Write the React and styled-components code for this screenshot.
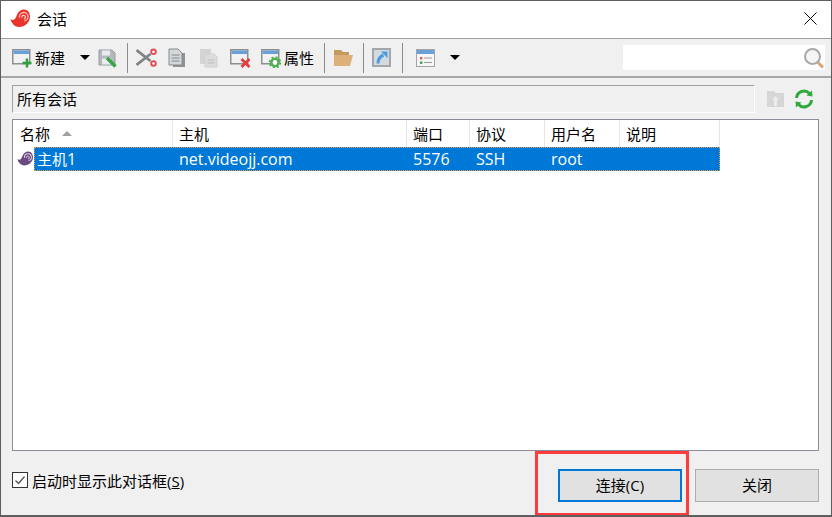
import styled, { createGlobalStyle } from "styled-components";

const GlobalStyle = createGlobalStyle`
  html, body { margin: 0; padding: 0; background: #f0f0f0; }
  * { box-sizing: border-box; }
  body { font-family: "Open Sans", "Noto Sans CJK SC", sans-serif; font-size: 15px; color: #000; }
`;

const Window = styled.div`
  position: relative;
  width: 832px;
  height: 517px;
  display: flex;
  flex-direction: column;
  background: #f0f0f0;
  border: 1px solid #5f5f5f;
  border-bottom-width: 2px;
  overflow: hidden;
`;
const TitleBar = styled.div`
  height: 38px;
  flex: none;
  background: #fff;
  display: flex;
  align-items: center;
  padding: 0 14px 2px 9px;
  gap: 7px;
  border-bottom: 1px solid #a0a0a0;
`;
const TitleText = styled.span`
  flex: 1;
  line-height: 20px;
`;
const Toolbar = styled.div`
  height: 39px;
  flex: none;
  display: flex;
  align-items: center;
  border-bottom: 2px solid #a8a8a8;
  padding-left: 11px;
  padding-right: 6px;
`;
const Tool = styled.div`
  display: flex;
  align-items: center;
  gap: 3px;
  margin-left: ${(p) => p.$gap || 0}px;
  white-space: nowrap;
`;
const Sep = styled.div`
  width: 1px;
  height: 30px;
  background: #8c8c8c;
  margin-left: ${(p) => p.$gap}px;
`;
const Caret = styled.div`
  width: 0;
  height: 0;
  border-left: 5px solid transparent;
  border-right: 5px solid transparent;
  border-top: 5px solid #000;
  margin-left: ${(p) => p.$gap}px;
`;
const Search = styled.div`
  margin-left: auto;
  width: 202px;
  height: 25px;
  background: #fff;
  display: flex;
  align-items: center;
  justify-content: flex-end;
`;
const PathRow = styled.div`
  display: flex;
  align-items: center;
  margin: 7px 0 0 11px;
  height: 28px;
  flex: none;
`;
const PathBox = styled.div`
  width: 743px;
  height: 28px;
  border-top: 1px solid #a0a0a0;
  border-left: 1px solid #a0a0a0;
  border-right: 1px solid #fff;
  border-bottom: 1px solid #fff;
  padding-left: 4px;
  line-height: 26px;
`;
const PathIcons = styled.div`
  display: flex;
  align-items: center;
  gap: 9px;
  margin-left: 11px;
`;
const List = styled.div`
  margin: 6px 12px 0 11px;
  height: 332px;
  flex: none;
  background: #fff;
  border: 1px solid #8c8c9c;
`;
const HeadRow = styled.div`
  display: grid;
  grid-template-columns: 160px 234px 63px 75px 75px 100px;
  height: 27px;
`;
const HeadCell = styled.div`
  display: flex;
  align-items: center;
  padding-left: 6px;
  border-right: 1px solid #e5e5e5;
  gap: 12px;
  &:first-child { padding-left: 7px; }
`;
const SortMark = styled.div`
  width: 0;
  height: 0;
  border-left: 5px solid transparent;
  border-right: 5px solid transparent;
  border-bottom: 5px solid #a0a0a0;
`;
const BodyRow = styled.div`
  display: flex;
  align-items: center;
  height: 24px;
`;
const RowIcon = styled.div`
  width: 21px;
  flex: none;
  padding-left: 4px;
  display: flex;
`;
const Selection = styled.div`
  display: grid;
  grid-template-columns: 139px 234px 63px 75px 75px 100px;
  height: 24px;
  align-items: center;
  background: #0078d7;
  color: #fff;
  outline: 1px dotted #e09a50;
  outline-offset: -1px;
  font-size: 16px;
  line-height: 24px;
`;
const SelCell = styled.div`
  padding-left: 6px;
  &:first-child { padding-left: 3px; }
`;
const CjkName = styled.span`
  font-size: 15px;
`;
const Footer = styled.div`
  flex: 1;
  display: flex;
  align-items: flex-start;
  padding: 18px 12px 0 11px;
`;
const CheckLabel = styled.label`
  display: flex;
  align-items: center;
  gap: 4px;
  height: 16px;
  margin-top: 3px;
  flex: 1;
`;
const CheckBox = styled.span`
  width: 16px;
  height: 16px;
  background: #fff;
  border: 1px solid #333;
  display: flex;
  align-items: center;
  justify-content: center;
`;
const Button = styled.div`
  width: 124px;
  height: 33px;
  display: flex;
  align-items: center;
  justify-content: center;
  padding-bottom: 2px;
  background: #e1e1e1;
  border: ${(p) => p.$primary ? "2px solid #0078d7" : "1px solid #adadad"};
  margin-left: ${(p) => p.$gap || 0}px;
`;
const Mark = styled.div`
  position: absolute;
  left: 534px;
  top: 450px;
  width: 154px;
  height: 65px;
  border: 3px solid #ff3b3b;
  pointer-events: none;
`;

const WinFrame = () => (
  <>
    <rect x="0.75" y="1.75" width="17" height="14" fill="#f2f2f2" stroke="#8f8f8f" strokeWidth="1.5" />
    <rect x="1.5" y="2.5" width="15.500" height="3.5" fill="#6aa0d8" />
  </>
);

const Icon = ({ children, w = 20, h = 20 }) => (
  <svg width={w} height={h} viewBox={`0 0 ${w} ${h}`} style={{ display: "block", flex: "none" }}>{children}</svg>
);

const Shell = ({ color = "#e8352b", size = 20 }) => (
  <svg width={size} height={size} viewBox="0 0 20 20" style={{ display: "block", flex: "none" }}>
    <path d="M0.5 10C3 12 5 11 6.500 7C8 2.500 11 0.500 14 0.500C18 0.500 20 4 20 8C20 13 15 18 9 18C5 18 1.500 14.500 0.500 10Z" fill={color} />
    <path d="M9.500 8.500A4.300 4.300 0 1 1 14.500 12" fill="none" stroke="#fff" strokeWidth="1.300" opacity="0.75" />
    <path d="M11.800 8.500A1.800 1.800 0 1 1 13.800 10" fill="none" stroke="#fff" strokeWidth="1.200" opacity="0.75" />
  </svg>
);

const NewIcon = () => (
  <Icon>
    <WinFrame />
    <path d="M15 10.500v9M10.500 15h9" stroke="#2f9e3f" strokeWidth="2.500" />
  </Icon>
);
const SaveIcon = () => (
  <Icon w={19} h={20}>
    <path d="M1 2h13l3 3v12H1z" fill="#b4b9bd" stroke="#969ba0" />
    <rect x="4" y="2.500" width="8" height="5" fill="#e8ecef" />
    <rect x="4" y="10.500" width="9" height="6" fill="#e8ecef" />
    <path d="M9 10l8.500 8.500" stroke="#3aa346" strokeWidth="3.400" />
  </Icon>
);
const CutIcon = () => (
  <Icon w={21} h={20}>
    <path d="M0.500 2l14 11M0.500 17l14-11" stroke="#7f8488" strokeWidth="2.800" />
    <circle cx="17.500" cy="3.800" r="2.300" fill="#fff" stroke="#e04a55" strokeWidth="1.900" />
    <circle cx="17.500" cy="15.500" r="2.300" fill="#fff" stroke="#e04a55" strokeWidth="1.900" />
  </Icon>
);
const CopyIcon = () => (
  <Icon w={18} h={20}>
    <path d="M5 5h12v14H5z" fill="#8e9296" />
    <path d="M1 1h9l4 4v12H1z" fill="#d5d7d9" stroke="#85898d" />
    <path d="M3.500 7h8M3.500 10h8M3.500 13h8" stroke="#85898d" />
  </Icon>
);
const PasteIcon = () => (
  <Icon w={19} h={20}>
    <path d="M1 1h11v15H1z" fill="#d4d4d4" />
    <path d="M6 6h9l3 3v10H6z" fill="#dcdcdc" stroke="#cfcfcf" />
    <path d="M8.500 12h7M8.500 15h7" stroke="#bdbdbd" />
  </Icon>
);
const DeleteIcon = () => (
  <Icon w={21} h={20}>
    <WinFrame />
    <path d="M11.500 11l8 8M19.500 11l-8 8" stroke="#e2403f" strokeWidth="2.800" />
  </Icon>
);
const PropsIcon = () => (
  <Icon>
    <WinFrame />
    <circle cx="14" cy="14.500" r="3.600" fill="#fff" stroke="#4fae4f" strokeWidth="2.400" />
    <circle cx="14" cy="14.500" r="5.300" fill="none" stroke="#4fae4f" strokeWidth="1.800" strokeDasharray="2 2.160" />
  </Icon>
);
const FolderIcon = () => (
  <Icon w={21} h={18}>
    <path d="M1 1h7l2 2h6v4H1z" fill="#c69a5e" />
    <path d="M1 6h19l-3 11H1z" fill="#dcb078" />
  </Icon>
);
const ShortcutIcon = () => (
  <Icon w={19} h={19}>
    <rect x="1" y="1" width="17" height="17" fill="#d3dae1" stroke="#a3a7ab" strokeWidth="2" />
    <path d="M6 15.500C6 11 8 8.500 11.500 7" fill="none" stroke="#4a9ae0" strokeWidth="3" />
    <path d="M9 3.500h6.500V10z" fill="#4a9ae0" />
  </Icon>
);
const ViewIcon = () => (
  <Icon w={19} h={18}>
    <rect x="0.500" y="0.500" width="18" height="17" fill="#f6f6f6" stroke="#a5a5a5" />
    <rect x="1" y="1" width="17" height="4" fill="#6aa0d8" />
    <rect x="4" y="8" width="2.400" height="2.400" fill="#e0584f" />
    <rect x="4" y="12.500" width="2.400" height="2.400" fill="#3aa346" />
    <path d="M8 9h8M8 13.500h8" stroke="#9a9a9a" />
  </Icon>
);
const SearchIcon = () => (
  <Icon w={22} h={22}>
    <path d="M14 14.500l6 6" stroke="#d8a673" strokeWidth="3" />
    <circle cx="9.500" cy="9.500" r="7.500" fill="#f5f5f5" stroke="#a8a8a8" strokeWidth="2" />
  </Icon>
);
const UploadIcon = () => (
  <Icon w={19} h={18}>
    <path d="M1 1h7l2 2h8v14H1z" fill="#d6d6d6" />
    <path d="M9.500 6l3.500 4h-2v6H8v-6H6z" fill="#ececec" />
  </Icon>
);
const RefreshIcon = () => (
  <Icon w={20} h={20}>
    <path d="M2.500 9A7.500 7.500 0 0 1 15.500 4.500M17.500 11A7.500 7.500 0 0 1 4.500 15.500" fill="none" stroke="#2fa83c" strokeWidth="3" />
    <path d="M12.500 6.500l6 1-.5-6zM7.500 13.500l-6-1 .5 6z" fill="#2fa83c" />
  </Icon>
);

export default function App() {
  return (
    <Window>
      <GlobalStyle />
      <TitleBar>
        <Shell />
        <TitleText>会话</TitleText>
        <svg width="13" height="13" viewBox="0 0 13 13">
          <path d="M0.500 0.500l12 12M12.500 0.500l-12 12" stroke="#000" strokeWidth="1" />
        </svg>
      </TitleBar>
      <Toolbar>
        <Tool><NewIcon />新建</Tool>
        <Caret $gap={15} />
        <Tool $gap={8}><SaveIcon /></Tool>
        <Sep $gap={10} />
        <Tool $gap={8}><CutIcon /></Tool>
        <Tool $gap={11}><CopyIcon /></Tool>
        <Tool $gap={13}><PasteIcon /></Tool>
        <Tool $gap={12}><DeleteIcon /></Tool>
        <Tool $gap={10}><PropsIcon />属性</Tool>
        <Sep $gap={10} />
        <Tool $gap={8}><FolderIcon /></Tool>
        <Sep $gap={9} />
        <Tool $gap={8}><ShortcutIcon /></Tool>
        <Sep $gap={11} />
        <Tool $gap={13}><ViewIcon /></Tool>
        <Caret $gap={15} />
        <Search><SearchIcon /></Search>
      </Toolbar>
      <PathRow>
        <PathBox>所有会话</PathBox>
        <PathIcons>
          <UploadIcon />
          <RefreshIcon />
        </PathIcons>
      </PathRow>
      <List>
        <HeadRow>
          <HeadCell>名称<SortMark /></HeadCell>
          <HeadCell>主机</HeadCell>
          <HeadCell>端口</HeadCell>
          <HeadCell>协议</HeadCell>
          <HeadCell>用户名</HeadCell>
          <HeadCell>说明</HeadCell>
        </HeadRow>
        <BodyRow>
          <RowIcon><Shell color="#6b4a80" size={16} /></RowIcon>
          <Selection>
            <SelCell><CjkName>主机</CjkName>1</SelCell>
            <SelCell>net.videojj.com</SelCell>
            <SelCell>5576</SelCell>
            <SelCell>SSH</SelCell>
            <SelCell>root</SelCell>
            <SelCell />
          </Selection>
        </BodyRow>
      </List>
      <Footer>
        <CheckLabel>
          <CheckBox>
            <svg width="12" height="12" viewBox="0 0 12 12">
              <path d="M1.500 6.500l3 3 6-7" fill="none" stroke="#555" strokeWidth="1.300" />
            </svg>
          </CheckBox>
          <span>启动时显示此对话框(<u>S</u>)</span>
        </CheckLabel>
        <Button $primary>连接(C)</Button>
        <Button $gap={13}>关闭</Button>
      </Footer>
      <Mark />
    </Window>
  );
}
